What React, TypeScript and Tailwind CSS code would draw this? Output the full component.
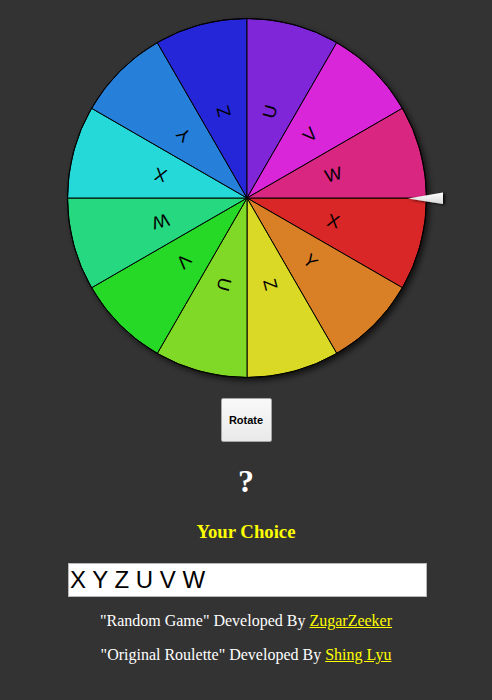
import React from "react";

const LETTERS = ["X", "Y", "Z", "U", "V", "W"];

function Wheel() {
  const cx = 247;
  const cy = 198;
  const r = 179.5;
  const segs = Array.from({ length: 12 }, (_, i) => {
    const a0 = (i * 30 * Math.PI) / 180;
    const a1 = ((i + 1) * 30 * Math.PI) / 180;
    const am = ((i * 30 + 15) * Math.PI) / 180;
    const x0 = cx + r * Math.cos(a0);
    const y0 = cy + r * Math.sin(a0);
    const x1 = cx + r * Math.cos(a1);
    const y1 = cy + r * Math.sin(a1);
    const tx = cx + 89.5 * Math.cos(am);
    const ty = cy + 89.5 * Math.sin(am);
    return {
      d: `M${cx},${cy} L${x0},${y0} A${r},${r} 0 0 1 ${x1},${y1} Z`,
      color: `hsl(${i * 30}, 70%, 50%)`,
      tx,
      ty,
      rot: i * 30 + 15,
      letter: LETTERS[i % 6],
    };
  });
  return (
    <svg width={492} height={392} className="block shrink-0">
      <defs>
        <filter id="ws" x="-20%" y="-20%" width="140%" height="140%">
          <feDropShadow dx="3" dy="3" stdDeviation="3" floodColor="#000" floodOpacity="0.7" />
        </filter>
        <filter id="ps" x="-50%" y="-100%" width="200%" height="300%">
          <feDropShadow dx="2" dy="1" stdDeviation="1.5" floodColor="#000" floodOpacity="0.8" />
        </filter>
        <linearGradient id="pg" x1="0" y1="0" x2="0" y2="1">
          <stop offset="0" stopColor="#ffffff" />
          <stop offset="1" stopColor="#d8d8d8" />
        </linearGradient>
      </defs>
      <circle cx={cx} cy={cy} r={r} fill="#000" filter="url(#ws)" />
      {segs.map((s, i) => (
        <path key={i} d={s.d} fill={s.color} stroke="#000" strokeWidth={1} strokeLinejoin="round" />
      ))}
      <circle cx={cx} cy={cy} r={r} fill="none" stroke="#000" strokeWidth={1} />
      {segs.map((s, i) => (
        <text
          key={"t" + i}
          x={s.tx}
          y={s.ty}
          transform={`rotate(${s.rot} ${s.tx} ${s.ty})`}
          textAnchor="middle"
          dominantBaseline="central"
          fontFamily="'Liberation Sans', Arial, sans-serif"
          fontSize={18}
          fill="#000"
        >
          {s.letter}
        </text>
      ))}
      <polygon points="408,198.5 443,192.5 443,204" fill="url(#pg)" filter="url(#ps)" />
    </svg>
  );
}

export default function App() {
  return (
    <div className="min-h-screen w-full bg-[#333333] flex flex-col items-center font-['Liberation_Serif',serif]">
      <Wheel />
      <button className="mt-[6px] w-[51px] h-[44px] border border-[#a6a6a6] rounded-[2px] bg-gradient-to-b from-[#f9f9f9] to-[#e9e9e9] text-[11px] font-bold text-black font-['Liberation_Sans',Arial,sans-serif] leading-none">
        Rotate
      </button>
      <div className="mt-[23px] text-[32px] leading-[32px] font-bold text-white">?</div>
      <div className="mt-[26px] text-[18.72px] leading-[18.72px] font-bold text-[#ffff00]">Your Choice</div>
      <input
        readOnly
        value="X Y Z U V W"
        className="mt-[21px] ml-[3px] w-[359px] h-[34px] bg-white border border-[#b8b8b8] px-[1px] text-[24px] text-black font-['Liberation_Sans',Arial,sans-serif] outline-none"
      />
      <p className="mt-[15px] text-[16px] leading-[18px] text-white">
        "Random Game" Developed By{" "}
        <a href="#" className="text-[#ffff00] underline">
          ZugarZeeker
        </a>
      </p>
      <p className="mt-[16px] text-[16px] leading-[18px] text-white">
        "Original Roulette" Developed By{" "}
        <a href="#" className="text-[#ffff00] underline">
          Shing Lyu
        </a>
      </p>
    </div>
  );
}
